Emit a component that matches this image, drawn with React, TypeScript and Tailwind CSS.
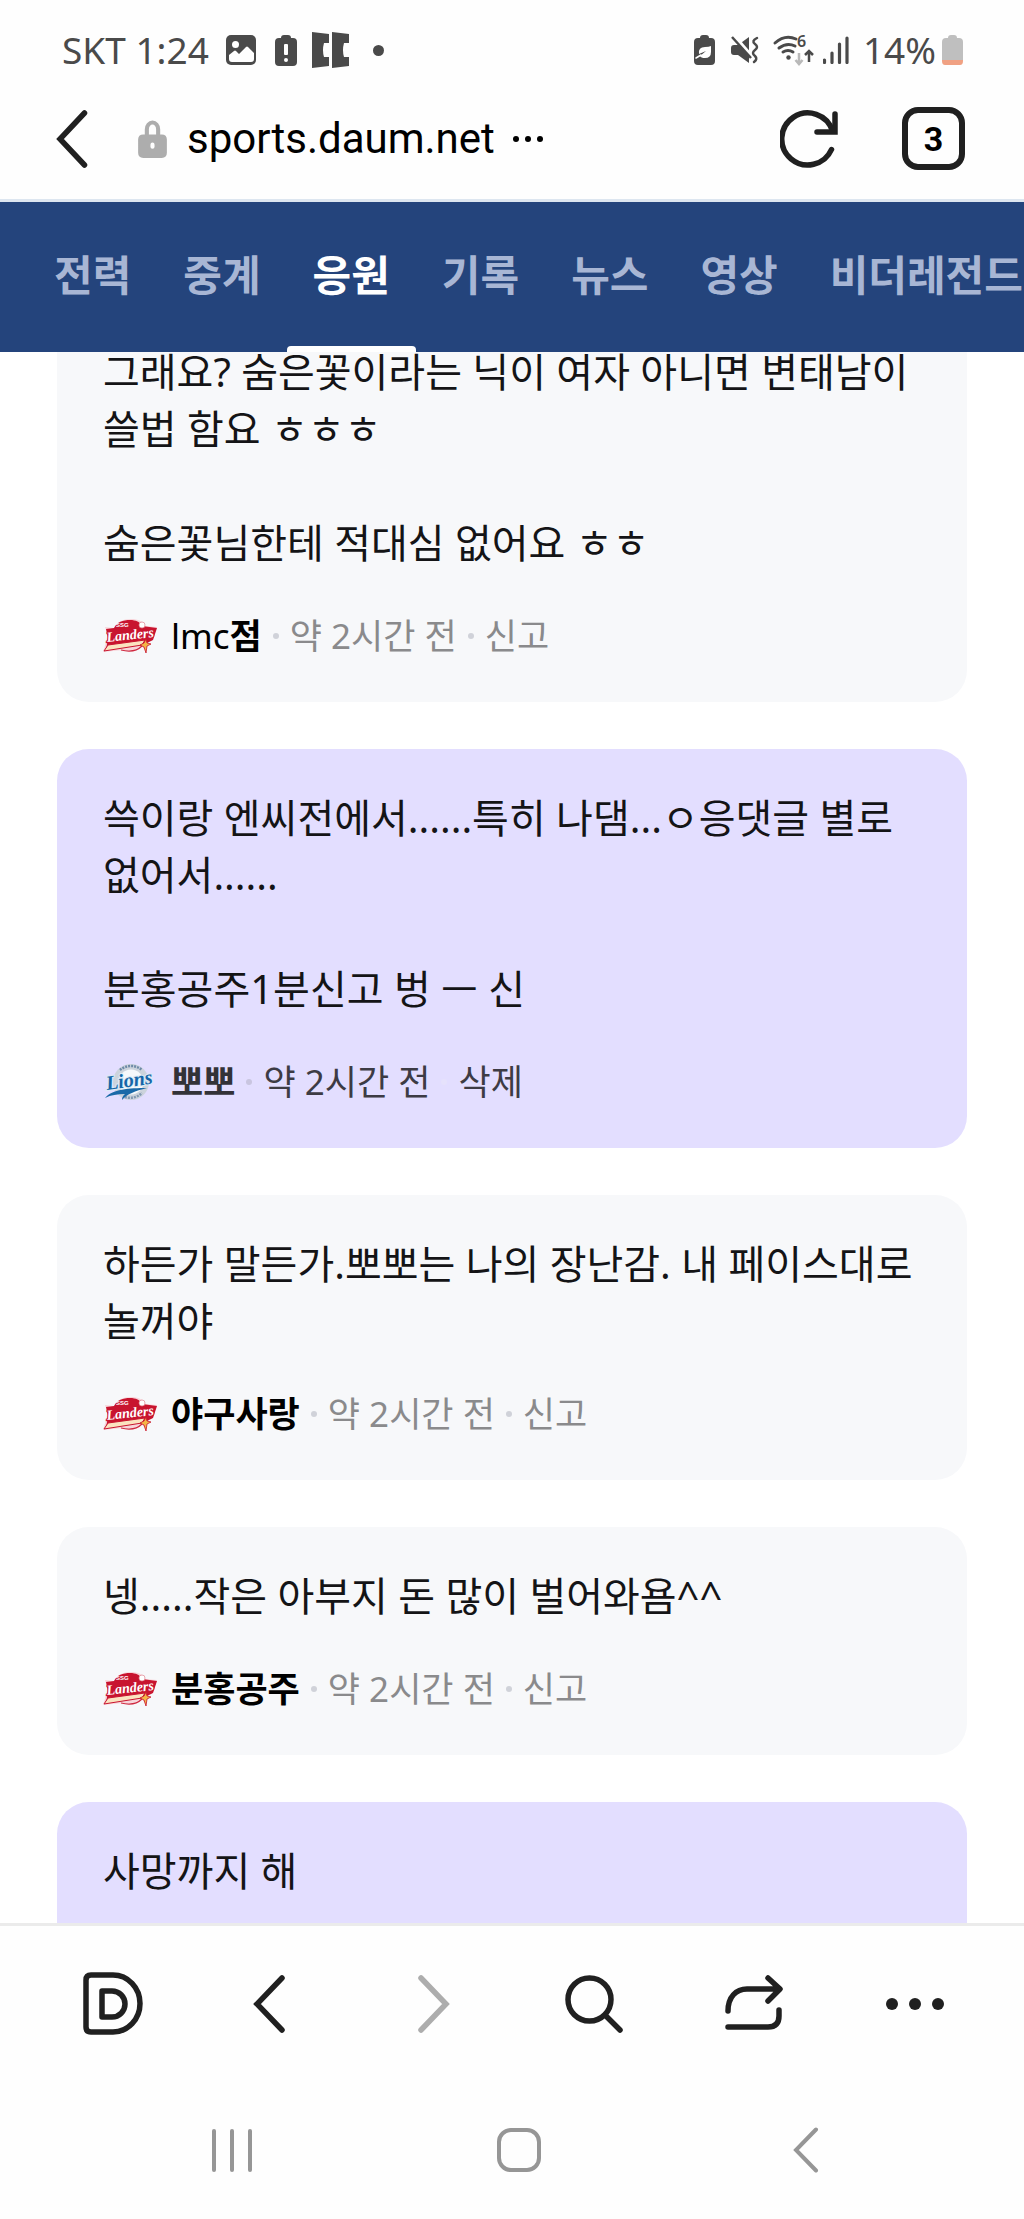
import React from "react";

type Team = "landers" | "lions";

interface Comment {
  id: number;
  team: Team;
  author: string;
  latin?: string;
  body: string;
  time: string;
  mine?: boolean;
}

const tabs = ["전력", "중계", "응원", "기록", "뉴스", "영상", "비더레전드"];

const comments: Comment[] = [
  {
    id: 1,
    team: "landers",
    latin: "lmc",
    author: "점",
    body: "그래요? 숨은꽃이라는 닉이 여자 아니면 변태남이 쓸법 함요 ㅎㅎㅎ\n\n숨은꽃님한테 적대심 없어요 ㅎㅎ",
    time: "약 2시간 전",
  },
  {
    id: 2,
    team: "lions",
    author: "뽀뽀",
    body: "쓱이랑 엔씨전에서......특히 나댐...ㅇ응댓글 별로 없어서......\n\n분홍공주1분신고 벙 ㅡ 신",
    time: "약 2시간 전",
    mine: true,
  },
  {
    id: 3,
    team: "landers",
    author: "야구사랑",
    body: "하든가 말든가.뽀뽀는 나의 장난감. 내 페이스대로 놀꺼야",
    time: "약 2시간 전",
  },
  {
    id: 4,
    team: "landers",
    author: "분홍공주",
    body: "넹.....작은 아부지 돈 많이 벌어와욤^^",
    time: "약 2시간 전",
  },
  {
    id: 5,
    team: "lions",
    author: "뽀뽀",
    body: "사망까지 해",
    time: "약 2시간 전",
    mine: true,
  },
];

function LandersLogo() {
  return (
    <svg viewBox="0 0 54 36" className="h-9 w-[54px] shrink-0 overflow-visible" role="img" aria-label="SSG Landers">
      <path d="M11 10C14 4 20 1 28 1c7 0 12 2 14 7l12 1-4 12-6 3-2 9-3-5c-6 4-12 5-19 4L0 34l5-16-3-9z" fill="#f8d5da" />
      <path d="M11 10C14 4 20 2 27 2c6 0 10 2 12 6l15 2-4 12-6 3-36 6-5 1 2-12-2-9z" fill="#c8142f" />
      <path d="M5 27l-4 6 38-6 3-5z" fill="#fbe3c0" stroke="#c8142f" strokeWidth="1" />
      <circle cx="39" cy="7" r="3" fill="#fff" stroke="#e0848f" strokeWidth="0.700" />
      <text x="13" y="9" fontSize="6" fontWeight="700" fill="#fff" fontFamily="Liberation Sans, sans-serif">SSG</text>
      <text x="4" y="24" fontSize="14" fontWeight="700" fontStyle="italic" fill="#fff" stroke="#c8142f" strokeWidth="2" paintOrder="stroke" fontFamily="Liberation Serif, serif" transform="rotate(-6 4 24)">Landers</text>
      <path d="M18 32c8 2 16 1 21-4" fill="none" stroke="#d0283f" strokeWidth="1.200" />
      <path d="M43 21l1 4 4 1-4 2-1 7-2-6-4-2 4-2z" fill="#f3b545" stroke="#c8142f" strokeWidth="0.800" />
    </svg>
  );
}

function LionsLogo() {
  return (
    <svg viewBox="0 0 54 38" className="h-[38px] w-[54px] shrink-0 overflow-visible" role="img" aria-label="Samsung Lions">
      <circle cx="28" cy="19" r="18" fill="#ccd3dc" />
      <circle cx="28" cy="19" r="12.500" fill="#f6f8fb" />
      <path d="M17 7a17 17 0 0 1 22 0" fill="none" stroke="#6f8ba8" strokeWidth="2.500" strokeDasharray="2 1" />
      <path d="M22 34a17 17 0 0 0 17-4" fill="none" stroke="#8299b2" strokeWidth="2.500" strokeDasharray="2 1" />
      <path d="M2 35c7-9 24-10 42-10-12 3-20 6-25 12 0-3 1-4 3-6-8 0-14 1-20 4z" fill="#1a69a8" />
      <text x="4" y="27" fontSize="20" fontWeight="700" fontStyle="italic" fill="#1565a8" stroke="#dbeaf5" strokeWidth="2" paintOrder="stroke" fontFamily="Liberation Serif, serif" transform="rotate(-8 4 27)">Lions</text>
    </svg>
  );
}

function Separator({ tone }: { tone: "grey" | "violet" | "faint" }) {
  const tones = {
    grey: "mx-[11px] size-[6px] rounded-full bg-[#d0d2d9]",
    violet: "mx-[11px] size-[6px] rounded-full bg-[#c9c5e0]",
    faint: "mx-[11px] size-[6px] rounded-full bg-[#e6e2fc]",
  };
  return <span aria-hidden="true" className={tones[tone]} />;
}

function CommentCard({ comment }: { comment: Comment }) {
  const mine = comment.mine;
  return (
    <li className={mine ? "rounded-[32px] bg-[#e3deff] px-[46px] pt-10 pb-[45px]" : "rounded-[32px] bg-[#f7f8fa] px-[46px] pt-10 pb-[45px]"}>
      <p className="text-[40px] leading-[57px] break-keep whitespace-pre-line text-[#141416]">{comment.body}</p>
      <div className="mt-11 flex h-[42px] items-center text-[35px] leading-[42px]">
        {comment.team === "landers" ? <LandersLogo /> : <LionsLogo />}
        <span className={mine ? "ml-[14px] font-bold text-[#333238]" : "ml-[14px] font-bold text-black"}>
          {comment.latin && <span className="font-normal">{comment.latin}</span>}
          {comment.author}
        </span>
        <Separator tone={mine ? "violet" : "grey"} />
        <span className={mine ? "text-[#3d3b44]" : "text-[#8a8a8c]"}>{comment.time}</span>
        <Separator tone={mine ? "faint" : "grey"} />
        <button type="button" className={mine ? "text-[#3d3b44]" : "text-[#8a8a8c]"}>
          {mine ? "삭제" : "신고"}
        </button>
      </div>
    </li>
  );
}

function StatusBar() {
  return (
    <div className="flex h-[78px] shrink-0 items-center justify-between pt-[22px] pr-[61px] pl-[62px] font-['Noto_Sans'] text-[37px] leading-[44px] text-[#4a4a4a]">
      <div className="flex items-center">
        <span>SKT 1:24</span>
        <svg viewBox="0 0 30 30" className="ml-[17px] size-[30px]" aria-hidden="true">
          <rect width="30" height="30" rx="5" fill="#4a4a4a" />
          <circle cx="9.500" cy="9.500" r="3.500" fill="#fff" />
          <path d="M3 20l5-4q1-1 2 0l3 3 7-7q1-1 2 0l6 6v6q0 3-3 3H6q-3 0-3-3z" fill="#fff" />
        </svg>
        <svg viewBox="0 0 22 31" className="ml-[19px] h-[31px] w-[22px]" aria-hidden="true">
          <path d="M6 3q0-3 3-3h4q3 0 3 3h2q4 0 4 4v20q0 4-4 4H4q-4 0-4-4V7q0-4 4-4z" fill="#4a4a4a" />
          <rect x="9" y="9" width="4" height="11" rx="1" fill="#fff" />
          <circle cx="11" cy="25" r="2" fill="#fff" />
        </svg>
        <svg viewBox="0 0 37 36" className="ml-[15px] h-[36px] w-[37px]" aria-hidden="true">
          <path d="M0 0l17 2v9h-5q-2 7 0 14h5v9L0 36zM20 0l17 2v9h-5q-2 7 0 14h5v9l-17 2z" fill="#4a4a4a" />
        </svg>
        <span className="ml-6 size-[11px] rounded-full bg-[#4a4a4a]" />
      </div>
      <div className="flex items-center">
        <svg viewBox="0 0 21 30" className="h-[30px] w-[21px]" aria-hidden="true">
          <path d="M6 3q0-3 3-3h3q3 0 3 3h2q4 0 4 4v19q0 4-4 4H4q-4 0-4-4V7q0-4 4-4z" fill="#4a4a4a" />
          <path d="M17 11v6q0 6-6 6-4 0-5-2l6-5-7 3q-1-7 6-7 4 0 6-1z" fill="#fff" />
          <path d="M2 23l5-3" stroke="#fff" strokeWidth="1.500" strokeLinecap="round" />
        </svg>
        <svg viewBox="0 0 28 28" className="ml-4 size-7" aria-hidden="true">
          <path d="M0 12q0-3 3-3h4L18 1v26L7 19H3q-3 0-3-3z" fill="#4a4a4a" />
          <path d="M3 0l19 22" stroke="#fff" strokeWidth="4" />
          <path d="M1 1l19 21" stroke="#4a4a4a" strokeWidth="2.500" />
          <path d="M26 2q-6 3-2 6t0 6q-4 3 0 6 3 3-1 6" fill="none" stroke="#4a4a4a" strokeWidth="2.500" strokeLinecap="round" />
        </svg>
        <svg viewBox="0 0 41 30" className="ml-[14px] h-[30px] w-[41px] overflow-visible" aria-hidden="true">
          <g fill="none" stroke="#4a4a4a" strokeWidth="3" strokeLinecap="round">
            <path d="M2 8Q12-1 23 4" />
            <path d="M6 13q8-6 16-2" />
            <path d="M10 17q5-3 10 0" />
          </g>
          <circle cx="15.500" cy="22.500" r="2.200" fill="#4a4a4a" />
          <text x="24" y="12" fontSize="16" fontWeight="600" fill="#4a4a4a" fontFamily="Noto Sans, sans-serif">6</text>
          <path d="M26 18v11m-3.500-4l3.500 4 3.500-4" fill="none" stroke="#b9b9b9" strokeWidth="2.500" />
          <path d="M36 27V16m-4 4l4-4 4 4" fill="none" stroke="#4a4a4a" strokeWidth="2.500" />
        </svg>
        <svg viewBox="0 0 26 28" className="ml-[9px] h-7 w-[26px]" aria-hidden="true">
          <path d="M1.500 24v2.500M9 17v9.500M16.500 8v18.500M24 2v24.500" stroke="#4a4a4a" strokeWidth="3.200" strokeLinecap="round" />
        </svg>
        <span className="ml-[14px]">14%</span>
        <svg viewBox="0 0 21 30" className="ml-[6px] h-[30px] w-[21px]" aria-hidden="true">
          <path d="M6 3q0-3 3-3h3q3 0 3 3h2q4 0 4 4v19H0V7q0-4 4-4z" fill="#bfbfbf" />
          <path d="M0 25h21v1q0 4-3 4H3q-3 0-3-4z" fill="#f0a183" />
        </svg>
      </div>
    </div>
  );
}

function BrowserBar() {
  return (
    <header className="flex h-[124px] shrink-0 items-center border-b-[3px] border-[#dde6f0] pr-[59px] pl-14">
      <button type="button" aria-label="뒤로">
        <svg viewBox="0 0 32 58" className="h-[58px] w-8" fill="none" stroke="#202020" strokeWidth="5.500" strokeLinecap="round">
          <path d="M28.500 3L4 29l24.500 26" />
        </svg>
      </button>
      <svg viewBox="0 0 28 37" className="ml-[50px] h-[38px] w-[29px]" aria-hidden="true">
        <path d="M8.500 16V9a5.500 6.500 0 0 1 11 0v7" fill="none" stroke="#adadad" strokeWidth="4" />
        <path d="M5 14h18q5 0 5 5v13q0 5-5 5H5q-5 0-5-5V19q0-5 5-5zm9 8q-2 0-2 2v2q0 2 2 2t2-2v-2q0-2-2-2z" fill="#adadad" fillRule="evenodd" />
      </svg>
      <span className="ml-5 font-['Roboto'] text-[42px] leading-[50px] text-black">sports.daum.net</span>
      <button type="button" aria-label="주소 더보기" className="ml-[18px] flex gap-[6px]">
        <span className="size-[6px] rounded-full bg-black" />
        <span className="size-[6px] rounded-full bg-black" />
        <span className="size-[6px] rounded-full bg-black" />
      </button>
      <button type="button" aria-label="새로고침" className="ml-auto">
        <svg viewBox="0 0 58 58" className="size-[58px]" fill="none" stroke="#202020" strokeWidth="5.500" strokeLinecap="round">
          <path d="M51.500 39.500A26 26 0 1 1 52.500 21" />
          <path d="M55 4v18H37" />
        </svg>
      </button>
      <button
        type="button"
        aria-label="탭 3개"
        className="ml-16 flex size-[63px] items-center justify-center rounded-2xl border-[6px] border-[#202020] font-['Roboto'] text-[34px] leading-[40px] font-bold text-black"
      >
        3
      </button>
    </header>
  );
}

function TabNav() {
  return (
    <nav className="flex h-[150px] shrink-0 overflow-hidden bg-[#24447c] pl-7 text-[42px] leading-[60px] font-bold">
      {tabs.map((tab) => (
        <a
          key={tab}
          href="#"
          aria-current={tab === "응원" ? "page" : undefined}
          className={
            tab === "응원"
              ? "relative flex shrink-0 items-center px-[26px] pb-1 text-white after:absolute after:inset-x-0 after:bottom-0 after:h-[6px] after:rounded-t-sm after:bg-white"
              : "flex shrink-0 items-center px-[26px] pb-1 whitespace-nowrap text-[#a8b6d4]"
          }
        >
          {tab}
        </a>
      ))}
    </nav>
  );
}

const toolStroke = { fill: "none", stroke: "#202020", strokeWidth: 5.5, strokeLinecap: "round" as const, strokeLinejoin: "round" as const };

function ToolBar() {
  return (
    <div className="grid h-[158px] shrink-0 grid-cols-6 place-items-center border-t-[3px] border-[#ebebeb] pr-[29px] pl-[33px]">
      <button type="button" aria-label="다음 홈">
        <svg viewBox="0 0 60 63" className="h-[63px] w-[60px]" {...toolStroke}>
          <path d="M8 3h22a27 28.500 0 0 1 0 57H8q-5 0-5-5V8q0-5 5-5z" />
          <path d="M19 19h10a12.500 12.500 0 0 1 0 26H19z" />
        </svg>
      </button>
      <button type="button" aria-label="이전">
        <svg viewBox="0 0 40 58" className="h-[58px] w-10" {...toolStroke} strokeLinejoin="miter">
          <path d="M29 3L4 29l25 26" />
        </svg>
      </button>
      <button type="button" aria-label="앞으로">
        <svg viewBox="0 0 32 58" className="h-[58px] w-8" {...toolStroke} stroke="#adadad" strokeLinejoin="miter">
          <path d="M3 3l25 26L3 55" />
        </svg>
      </button>
      <button type="button" aria-label="검색">
        <svg viewBox="0 0 58 58" className="size-[58px]" {...toolStroke}>
          <circle cx="24.500" cy="24.500" r="21.500" />
          <path d="M41 41l14 14" />
        </svg>
      </button>
      <button type="button" aria-label="공유">
        <svg viewBox="0 0 58 58" className="size-[58px]" {...toolStroke}>
          <path d="M3 36C3 22 11 14 22 14h32M43 3l12 11-12 12M54 35v6q0 11-11 11H3" />
        </svg>
      </button>
      <button type="button" aria-label="더보기" className="flex gap-[11px]">
        <span className="size-3 rounded-full bg-[#202020]" />
        <span className="size-3 rounded-full bg-[#202020]" />
        <span className="size-3 rounded-full bg-[#202020]" />
      </button>
    </div>
  );
}

function SystemNav() {
  return (
    <div className="grid h-[138px] shrink-0 grid-cols-3 place-items-center pr-[75px] pl-[88px]">
      <button type="button" aria-label="최근 앱" className="flex h-11 items-center gap-[14px]">
        <span className="h-[43px] w-1 rounded-full bg-[#969696]" />
        <span className="h-[43px] w-1 rounded-full bg-[#969696]" />
        <span className="h-[43px] w-1 rounded-full bg-[#969696]" />
      </button>
      <button type="button" aria-label="홈" className="size-11 rounded-[14px] border-4 border-[#969696]" />
      <button type="button" aria-label="시스템 뒤로">
        <svg viewBox="0 0 26 46" className="h-[46px] w-[26px]" fill="none" stroke="#969696" strokeWidth="4" strokeLinecap="round">
          <path d="M23 2.500L3 23l20 20.500" />
        </svg>
      </button>
    </div>
  );
}

export default function App() {
  return (
    <div className="flex h-screen flex-col bg-[#fefefe] font-['Noto_Sans','Noto_Sans_CJK_KR',sans-serif]">
      <StatusBar />
      <BrowserBar />
      <TabNav />
      <main className="min-h-0 flex-1 overflow-hidden bg-white px-[57px]">
        <ul className="-mt-[49px] flex flex-col gap-[47px]">
          {comments.map((comment) => (
            <CommentCard key={comment.id} comment={comment} />
          ))}
        </ul>
      </main>
      <ToolBar />
      <SystemNav />
    </div>
  );
}
